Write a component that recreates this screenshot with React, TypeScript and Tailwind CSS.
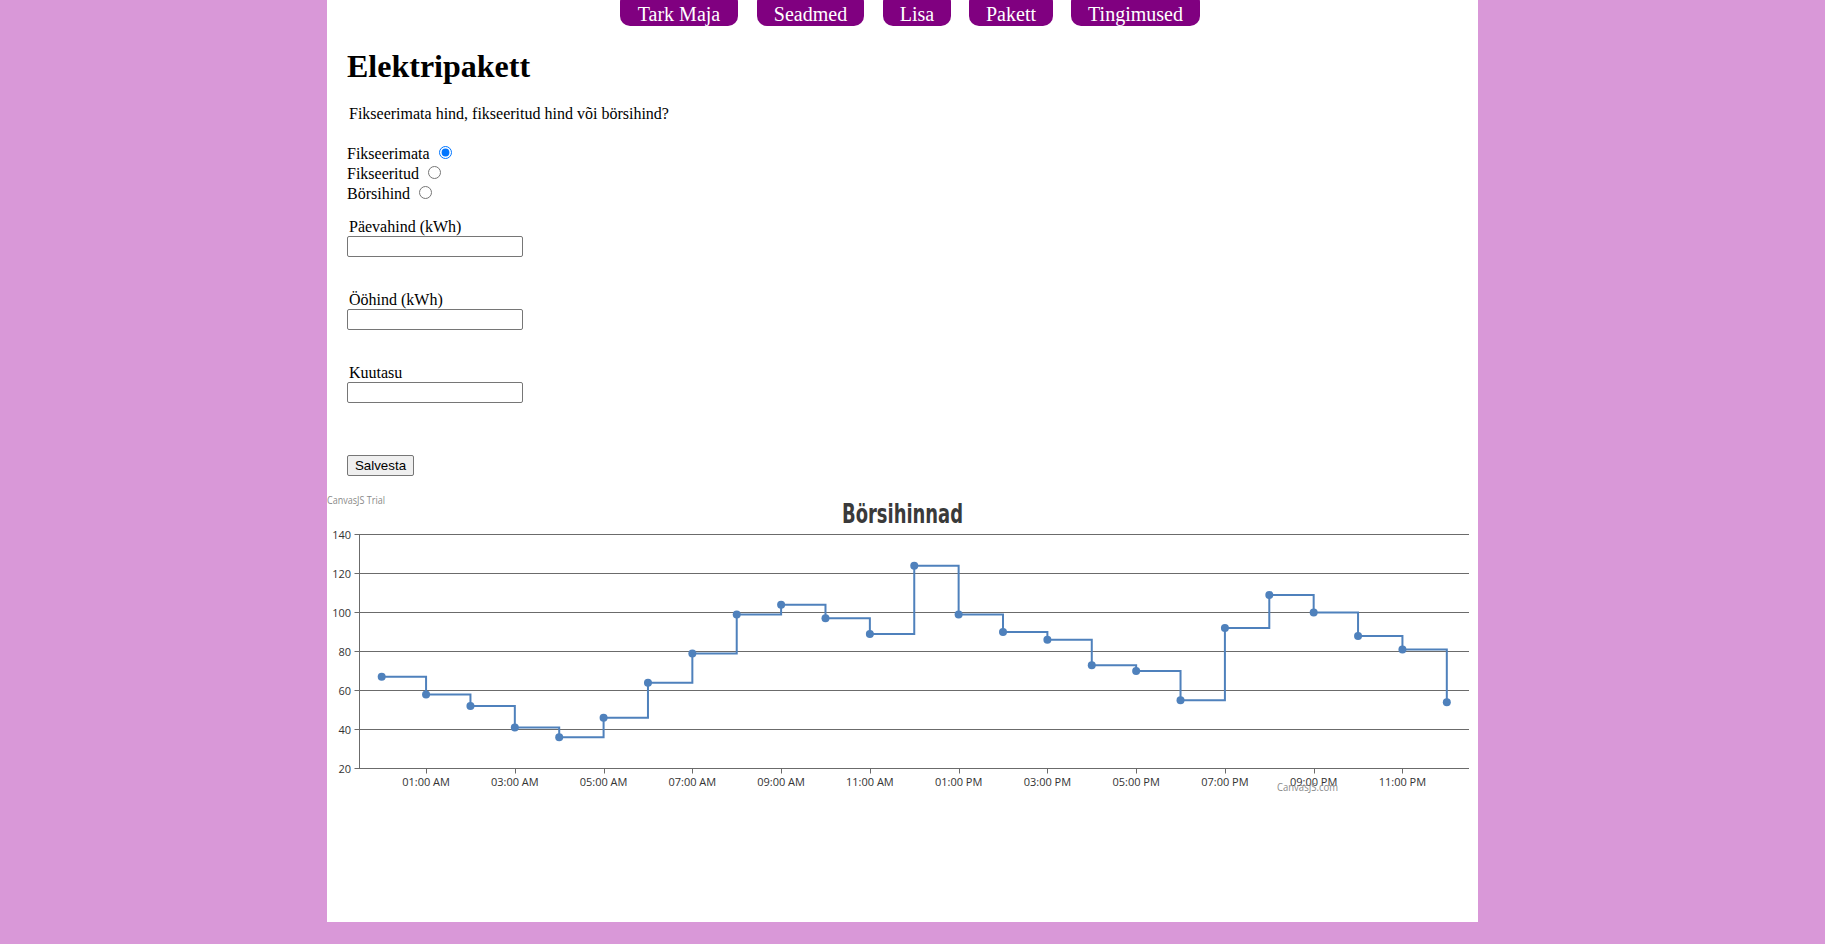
import React from "react";

const data = [67, 58, 52, 41, 36, 46, 64, 79, 99, 104, 97, 89, 124, 99, 90, 86, 73, 70, 55, 92, 109, 100, 88, 81, 54];

const X0 = 32.5;
const X1 = 1142;
const PER = (X1 - X0) / 25;
const xOf = (h: number) => X0 + (h + 0.5) * PER;
const yOf = (v: number) => 275.5 - (v - 20) * 1.95;

function hourLabel(h: number) {
  const ampm = h < 12 ? "AM" : "PM";
  let hh = h % 12;
  if (hh === 0) hh = 12;
  return `${hh < 10 ? "0" + hh : hh}:00 ${ampm}`;
}

function Chart() {
  const grid = [140, 120, 100, 80, 60, 40];
  let d = `M ${xOf(0)} ${yOf(data[0])}`;
  for (let i = 1; i < data.length; i++) {
    d += ` H ${xOf(i)} V ${yOf(data[i])}`;
  }
  const odd = [1, 3, 5, 7, 9, 11, 13, 15, 17, 19, 21, 23];
  const labelFont = "'Open Sans', 'Liberation Sans', sans-serif";
  return (
    <svg width={1151} height={400} className="block overflow-visible">
      <text x={0} y={11} fontSize={10} fill="#8a8a8a" fontFamily={labelFont} textLength={58} lengthAdjust="spacingAndGlyphs">
        CanvasJS Trial
      </text>
      <text
        x={575.5}
        y={30}
        textAnchor="middle"
        fontSize={27}
        fontWeight="bold"
        fill="#3a3a3a"
        fontFamily="'Liberation Sans Narrow', 'DejaVu Sans Condensed', 'Liberation Sans', sans-serif"
        textLength={121}
        lengthAdjust="spacingAndGlyphs"
      >
        Börsihinnad
      </text>
      {grid.map((g) => (
        <line key={g} x1={27.5} x2={X1} y1={yOf(g)} y2={yOf(g)} stroke="#6b6b6b" strokeWidth={1} />
      ))}
      {[140, 120, 100, 80, 60, 40, 20].map((g) => (
        <text key={"l" + g} x={24} y={yOf(g) + 4} textAnchor="end" fontSize={11} fill="#333" fontFamily={labelFont}>
          {g}
        </text>
      ))}
      <line x1={27.5} x2={X1} y1={275.5} y2={275.5} stroke="#6b6b6b" strokeWidth={1} />
      <line x1={X0} x2={X0} y1={41.5} y2={275.5} stroke="#6b6b6b" strokeWidth={1} />
      {odd.map((h) => (
        <g key={"t" + h}>
          <line x1={Math.round(xOf(h)) + 0.5} x2={Math.round(xOf(h)) + 0.5} y1={275.5} y2={280.5} stroke="#6b6b6b" strokeWidth={1} />
          <text x={xOf(h)} y={293} textAnchor="middle" fontSize={11} fill="#333" fontFamily={labelFont}>
            {hourLabel(h)}
          </text>
        </g>
      ))}
      <path d={d} fill="none" stroke="#4f81bc" strokeWidth={2} />
      {data.map((v, i) => (
        <circle key={"c" + i} cx={xOf(i)} cy={yOf(v)} r={4} fill="#4f81bc" />
      ))}
      <text x={950} y={298} fontSize={10} fill="#8a8a8a" fontFamily={labelFont} textLength={61} lengthAdjust="spacingAndGlyphs">
        CanvasJS.com
      </text>
    </svg>
  );
}

export default function App() {
  const navs: [string, string][] = [
    ["Tark Maja", "w-[118px]"],
    ["Seadmed", "w-[107px]"],
    ["Lisa", "w-[68px]"],
    ["Pakett", "w-[84px]"],
    ["Tingimused", "w-[129px]"],
  ];
  return (
    <div className="min-h-screen bg-[#d998d8] font-['Liberation_Serif','Times_New_Roman',serif] text-black">
      <div className="ml-[327px] w-[1151px] h-[922px] bg-white text-[16px]">
        <nav className="flex gap-[18px] pl-[293px]">
          <a className={`${navs[0][1]} -mt-[8px] h-[34px] pt-[11px] rounded-[10px] bg-[#800080] text-white text-[20px] leading-[23px] flex justify-center`}>{navs[0][0]}</a>
          <a className={`${navs[1][1]} -mt-[8px] h-[34px] pt-[11px] rounded-[10px] bg-[#800080] text-white text-[20px] leading-[23px] flex justify-center ml-[1px]`}>{navs[1][0]}</a>
          <a className={`${navs[2][1]} -mt-[8px] h-[34px] pt-[11px] rounded-[10px] bg-[#800080] text-white text-[20px] leading-[23px] flex justify-center ml-[1px]`}>{navs[2][0]}</a>
          <a className={`${navs[3][1]} -mt-[8px] h-[34px] pt-[11px] rounded-[10px] bg-[#800080] text-white text-[20px] leading-[23px] flex justify-center`}>{navs[3][0]}</a>
          <a className={`${navs[4][1]} -mt-[8px] h-[34px] pt-[11px] rounded-[10px] bg-[#800080] text-white text-[20px] leading-[23px] flex justify-center`}>{navs[4][0]}</a>
        </nav>
        <h1 className="pl-[20px] mt-[22px] text-[32px] leading-[36px] font-bold">Elektripakett</h1>
        <p className="pl-[22px] mt-[21px] leading-[18px]">Fikseerimata hind, fikseeritud hind või börsihind?</p>
        <div className="pl-[20px] mt-[20px]">
          <div className="h-[20px] leading-[20px]">
            Fikseerimata <input type="radio" name="pkt" defaultChecked className="ml-[5px] mr-[3px] mt-[3px]" />
          </div>
          <div className="h-[20px] leading-[20px]">
            Fikseeritud <input type="radio" name="pkt" className="ml-[5px] mr-[3px] mt-[3px]" />
          </div>
          <div className="h-[20px] leading-[20px]">
            Börsihind <input type="radio" name="pkt" className="ml-[5px] mr-[3px] mt-[3px]" />
          </div>
        </div>
        <div className="pl-[22px] mt-[15px] leading-[18px]">Päevahind (kWh)</div>
        <input type="text" className="block ml-[20px] w-[176px] h-[21px] border border-[#767676] rounded-[2px] px-[2px] text-[13.33px] font-['Liberation_Sans',Arial,sans-serif]" />
        <div className="pl-[22px] mt-[34px] leading-[18px]">Ööhind (kWh)</div>
        <input type="text" className="block ml-[20px] w-[176px] h-[21px] border border-[#767676] rounded-[2px] px-[2px] text-[13.33px] font-['Liberation_Sans',Arial,sans-serif]" />
        <div className="pl-[22px] mt-[34px] leading-[18px]">Kuutasu</div>
        <input type="text" className="block ml-[20px] w-[176px] h-[21px] border border-[#767676] rounded-[2px] px-[2px] text-[13.33px] font-['Liberation_Sans',Arial,sans-serif]" />
        <button className="block mt-[52px] ml-[20px] w-[67px] h-[21px] border border-[#767676] rounded-[2px] bg-[#efefef] text-[13.33px] leading-[15px] font-['Liberation_Sans',Arial,sans-serif] text-black">
          Salvesta
        </button>
        <div className="mt-[17px]">
          <Chart />
        </div>
      </div>
    </div>
  );
}
